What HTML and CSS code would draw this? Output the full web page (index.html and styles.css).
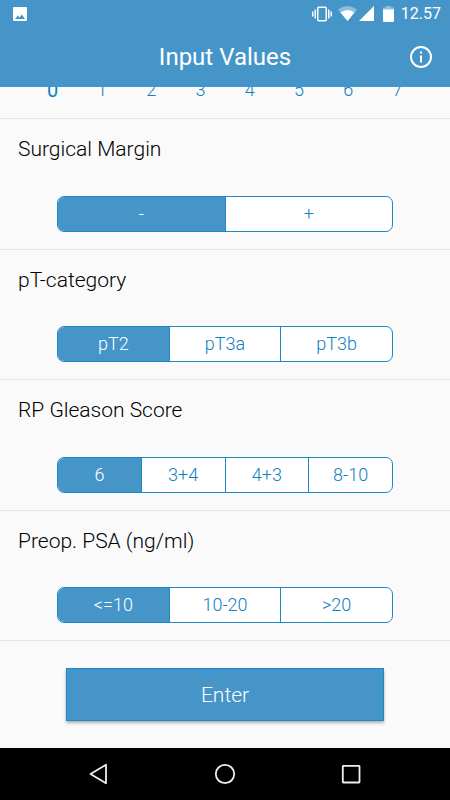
FILE: index.html
```html
<!DOCTYPE html>
<html lang="en">
<head>
<meta charset="utf-8">
<meta name="viewport" content="width=device-width, initial-scale=1">
<title>Input Values</title>
<link rel="stylesheet" href="styles.css">
</head>
<body>
<header class="top">
  <div class="status">
    <svg class="photo" width="14" height="14" viewBox="0 0 14 14"><path fill="#fff" fill-rule="evenodd" d="M1 0h12q1 0 1 1v12q0 1-1 1H1q-1 0-1-1V1q0-1 1-1zM2 12h10L8.800 7.500 6.500 10.500 4.800 8.500z"/></svg>
    <div class="status-right">
      <svg width="20" height="16" viewBox="0 0 20 16" fill="none" stroke="#fff"><rect x="5.750" y="1.250" width="8.500" height="13.500" rx="1" stroke-width="1.500"/><path stroke-width="1.500" d="M3.250 3.500v9M16.750 3.500v9M.75 5.500v5M19.250 5.500v5"/></svg>
      <svg class="wifi" width="19" height="15" viewBox="0 0 19 15"><path fill="#fff" opacity=".4" d="M0 3.500Q9.500-3.500 19 3.500L9.500 15z"/><path fill="#fff" d="M2.500 6.500Q9.500 1.500 16.500 6.500L9.500 15z"/></svg>
      <svg class="cell" width="15" height="15" viewBox="0 0 15 15"><path fill="#fff" d="M15 0v15H0z"/></svg>
      <svg class="battery" width="11" height="16" viewBox="0 0 11 16"><path fill="#fff" opacity=".4" d="M3 0h5v1.500h3V5H0V1.500h3z"/><path fill="#fff" d="M0 3.500h11V15q0 1-1 1H1q-1 0-1-1z"/></svg>
      <time>12.57</time>
    </div>
  </div>
  <div class="bar">
    <h1>Input Values</h1>
    <button class="info" type="button" aria-label="Information">
      <svg width="22" height="22" viewBox="0 0 22 22"><circle cx="11" cy="11" r="10" fill="none" stroke="#fff" stroke-width="2"/><path fill="#fff" d="M10 5.500h2v2h-2zM10 9.500h2v7h-2z"/></svg>
    </button>
  </div>
</header>
<form class="content">
  <div class="scale-clip">
    <div class="scale" role="radiogroup" aria-label="Score">
      <label><input type="radio" name="score" checked><span>0</span></label>
      <label><input type="radio" name="score"><span>1</span></label>
      <label><input type="radio" name="score"><span>2</span></label>
      <label><input type="radio" name="score"><span>3</span></label>
      <label><input type="radio" name="score"><span>4</span></label>
      <label><input type="radio" name="score"><span>5</span></label>
      <label><input type="radio" name="score"><span>6</span></label>
      <label><input type="radio" name="score"><span>7</span></label>
    </div>
  </div>
  <section>
    <h2 id="margin">Surgical Margin</h2>
    <div class="segments" role="radiogroup" aria-labelledby="margin">
      <label><input type="radio" name="margin" checked><span>-</span></label>
      <label><input type="radio" name="margin"><span>+</span></label>
    </div>
  </section>
  <section>
    <h2 id="category">pT-category</h2>
    <div class="segments" role="radiogroup" aria-labelledby="category">
      <label><input type="radio" name="category" checked><span>pT2</span></label>
      <label><input type="radio" name="category"><span>pT3a</span></label>
      <label><input type="radio" name="category"><span>pT3b</span></label>
    </div>
  </section>
  <section>
    <h2 id="gleason">RP Gleason Score</h2>
    <div class="segments" role="radiogroup" aria-labelledby="gleason">
      <label><input type="radio" name="gleason" checked><span>6</span></label>
      <label><input type="radio" name="gleason"><span>3+4</span></label>
      <label><input type="radio" name="gleason"><span>4+3</span></label>
      <label><input type="radio" name="gleason"><span>8-10</span></label>
    </div>
  </section>
  <section>
    <h2 id="psa">Preop. PSA (ng/ml)</h2>
    <div class="segments" role="radiogroup" aria-labelledby="psa">
      <label><input type="radio" name="psa" checked><span>&lt;=10</span></label>
      <label><input type="radio" name="psa"><span>10-20</span></label>
      <label><input type="radio" name="psa"><span>&gt;20</span></label>
    </div>
  </section>
  <div class="submit"><button type="button">Enter</button></div>
</form>
<nav>
  <button type="button" aria-label="Back"><svg width="22" height="22" viewBox="0 0 22 22"><path d="M18 1.800v18.400L2.500 11z"/></svg></button>
  <button type="button" aria-label="Home"><svg width="22" height="22" viewBox="0 0 22 22"><circle cx="11" cy="11" r="9.200"/></svg></button>
  <button type="button" aria-label="Recent apps"><svg width="22" height="22" viewBox="0 0 22 22"><rect x="2.800" y="2.800" width="16.700" height="16.700" rx=".5"/></svg></button>
</nav>
</body>
</html>
```
FILE: styles.css
```css
* { box-sizing: border-box; }
body {
  margin: 0;
  min-height: 100vh;
  display: flex;
  flex-direction: column;
  background: #fafafa;
  color: #000;
  font-family: Roboto, "Liberation Sans", sans-serif;
}
h1, h2 { margin: 0; }
svg { display: block; }
button { font: inherit; border: 0; padding: 0; cursor: pointer; }
.top { background: #4595c9; color: #fff; height: 87px; }
.status {
  height: 27px;
  display: flex;
  align-items: center;
  justify-content: space-between;
  padding: 0 9px 0 13px;
}
.status-right { display: flex; align-items: center; }
.wifi { margin-left: 6px; }
.cell { margin-left: 2px; }
.battery { margin-left: 9px; }
time { margin-left: 7px; font-size: 16px; font-weight: 400; line-height: 28px; }
.bar {
  height: 60px;
  display: grid;
  grid-template-columns: 40px 1fr 40px;
  align-items: center;
}
h1 {
  grid-column: 2;
  text-align: center;
  font-size: 24px;
  font-weight: 400;
  line-height: 32px;
}
.info { background: none; width: 22px; height: 22px; }
.content { flex: 1; display: flex; flex-direction: column; }
.scale-clip {
  height: 32px;
  overflow: hidden;
  display: flex;
  align-items: flex-end;
  border-bottom: 1px solid #e5e5e5;
}
.scale {
  flex: 1;
  display: flex;
  padding: 0 28px 16px;
  color: #0f80c0;
  font-size: 18px;
  font-weight: 300;
  line-height: 24px;
}
label { flex: 1; position: relative; text-align: center; cursor: pointer; }
label input { position: absolute; inset: 0; margin: 0; opacity: 0; }
label span { display: block; }
.scale input:checked + span { font-size: 20px; font-weight: 400; }
section {
  flex: 1;
  display: flex;
  flex-direction: column;
  justify-content: space-between;
  padding: 14px 0 17px;
  border-bottom: 1px solid #e5e5e5;
}
h2 {
  padding: 0 18px;
  font-size: 21px;
  font-weight: 300;
  line-height: 32px;
}
.segments {
  display: flex;
  margin: 0 57px;
  border: 1px solid #2088c4;
  border-radius: 7px;
  overflow: hidden;
  background: #fff;
  color: #0f80c0;
  font-size: 18px;
  font-weight: 300;
  line-height: 34px;
}
.segments label + label { border-left: 1px solid #2088c4; }
.segments input:checked + span { background: #4595c9; color: #fff; }
.submit { padding: 27px 66px; }
.submit button {
  display: block;
  width: 100%;
  height: 53px;
  border: 1px solid #2088c4;
  background: #4595c9;
  color: #fff;
  font-size: 21px;
  font-weight: 300;
  box-shadow: 0 2px 3px rgba(0, 0, 0, .3);
}
nav {
  height: 52px;
  display: flex;
  align-items: center;
  justify-content: space-between;
  padding: 0 88px;
  background: #000;
}
nav button { background: none; }
nav svg { fill: none; stroke: #eee; stroke-width: 1.8; stroke-linejoin: round; }
```
